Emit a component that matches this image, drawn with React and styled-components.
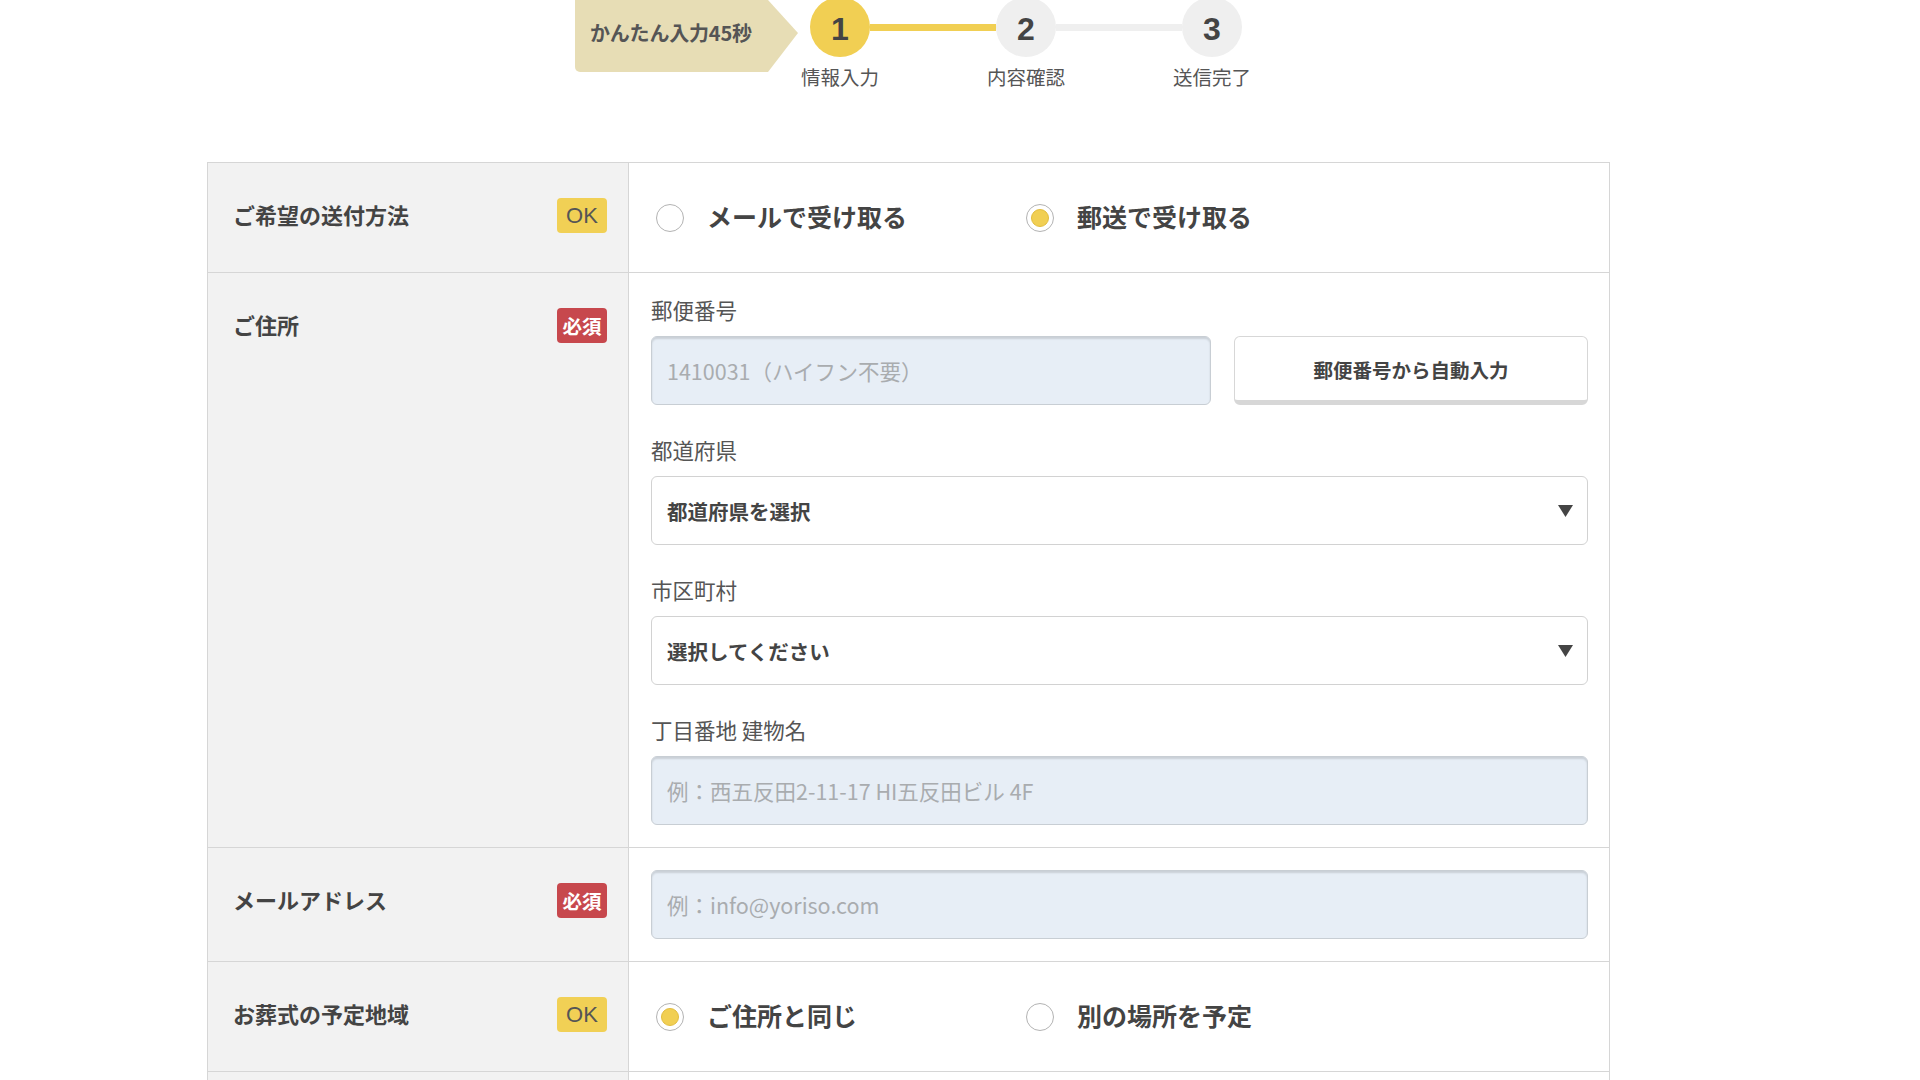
import React from "react";
import styled, { createGlobalStyle } from "styled-components";

const Global = createGlobalStyle`
  html, body { margin: 0; padding: 0; background: #fff; }
  body {
    font-family: "Noto Sans CJK JP", "Noto Sans", sans-serif;
    color: #444;
  }
  * { box-sizing: border-box; }
`;

const Page = styled.div`
  width: 1920px;
  padding-left: 207px;
`;

const Header = styled.header`
  display: flex;
  align-items: flex-start;
  height: 162px;
  padding-left: 368px;
`;

const TimeBadge = styled.div`
  width: 223px;
  height: 72px;
  margin-right: 12px;
  background: #e7ddb5;
  border-radius: 0 0 0 5px;
  clip-path: polygon(0 0, 193px 0, 223px 46%, 193px 100%, 0 100%);
  display: flex;
  align-items: center;
  padding: 0 0 8px 15px;
  font-size: 20px;
  font-weight: 700;
  color: #555;
  letter-spacing: -0.2px;
`;

const Stepper = styled.div`
  display: flex;
  align-items: flex-start;
  margin-top: -3px;
`;

const Step = styled.div`
  display: flex;
  flex-direction: column;
  align-items: center;
  width: 60px;
`;

const Circle = styled.div`
  width: 60px;
  height: 60px;
  border-radius: 50%;
  background: ${(p) => (p.$active ? "#f1cf53" : "#efefef")};
  display: flex;
  align-items: center;
  justify-content: center;
  font-family: "Liberation Sans", "Noto Sans", sans-serif;
  font-size: 32px;
  font-weight: 700;
  color: #444;
  padding-top: 4px;
`;

const StepLabel = styled.div`
  margin-top: 8px;
  font-size: 19.5px;
  line-height: 23px;
  white-space: nowrap;
  color: #555;
`;

const Connector = styled.div`
  width: 126px;
  height: 7px;
  margin-top: 27px;
  background: ${(p) => (p.$done ? "#f1cf53" : "#efefef")};
`;

const Table = styled.div`
  width: 1403px;
  border: 1px solid #d6d6d6;
  border-bottom: none;
`;

const Row = styled.div`
  display: grid;
  grid-template-columns: 421px 1fr;
  border-bottom: 1px solid #d6d6d6;
`;

const LabelCell = styled.div`
  background: #f2f2f2;
  border-right: 1px solid #d6d6d6;
  padding: 35px 21px 39px 25px;
  min-height: 109px;
`;

const LabelLine = styled.div`
  display: flex;
  align-items: center;
  justify-content: space-between;
`;

const LabelText = styled.span`
  font-size: 22px;
  font-weight: 700;
  color: #444;
  margin-top: -4px;
`;

const Tag = styled.span`
  display: inline-flex;
  align-items: center;
  justify-content: center;
  height: 35px;
  min-width: 50px;
  border-radius: 4px;
  background: ${(p) => (p.$required ? "#c7484d" : "#f1d055")};
  color: ${(p) => (p.$required ? "#fff" : "#555")};
  font-size: ${(p) => (p.$required ? "19.5px" : "22px")};
  font-weight: ${(p) => (p.$required ? 700 : 400)};
  font-family: ${(p) =>
    p.$required ? `"Noto Sans CJK JP", sans-serif` : `"Liberation Sans", sans-serif`};
`;

const ContentCell = styled.div`
  background: #fff;
  padding: ${(p) => p.$pad || "22px 21px 22px 22px"};
  display: flex;
  flex-direction: column;
  justify-content: center;
`;

const RadioGroup = styled.div`
  display: flex;
  align-items: center;
`;

const RadioOption = styled.label`
  display: flex;
  align-items: center;
  width: 370px;
  gap: 23px;
  font-size: 25px;
  font-weight: 700;
  color: #444;
  cursor: pointer;
  span:last-child {
    margin-top: -3px;
  }
`;

const RadioMark = styled.span`
  width: 28px;
  height: 28px;
  border-radius: 50%;
  border: 1.5px solid #b3b3b3;
  background: #fff;
  display: flex;
  align-items: center;
  justify-content: center;
  flex-shrink: 0;
  &::after {
    content: "";
    display: ${(p) => (p.$checked ? "block" : "none")};
    width: 16px;
    height: 16px;
    border-radius: 50%;
    background: #f1cf53;
    border: 1px solid #e2bd3e;
  }
`;

const Field = styled.div`
  & + & {
    margin-top: 30px;
  }
`;

const FieldLabel = styled.div`
  font-size: 21.5px;
  line-height: 30px;
  margin-bottom: 11px;
  color: #555;
`;

const PostalLine = styled.div`
  display: grid;
  grid-template-columns: 560px 1fr;
  gap: 23px;
`;

const TextInput = styled.input`
  display: block;
  width: 100%;
  height: 69px;
  border: 1px solid #c8ced4;
  border-radius: 6px;
  background: #e7eef6;
  box-shadow: inset 0 2px 2px rgba(0, 0, 0, 0.13);
  padding: 0 15px;
  font-family: "Noto Sans CJK JP", sans-serif;
  font-size: 21.5px;
  color: #444;
  outline: none;
  &::placeholder {
    color: #a9acaf;
  }
`;

const AutoButton = styled.button`
  height: 69px;
  border: 1px solid #d7d7d7;
  border-bottom: 5px solid #d7d7d7;
  border-radius: 6px;
  background: #fff;
  font-family: "Noto Sans CJK JP", sans-serif;
  font-size: 19.5px;
  font-weight: 700;
  color: #444;
  padding: 2px 0 0;
  cursor: pointer;
`;

const SelectBox = styled.div`
  height: 69px;
  border: 1px solid #d2d2d2;
  border-radius: 6px;
  background: #fff;
  display: flex;
  align-items: center;
  justify-content: space-between;
  padding: 0 14px 0 15px;
  font-size: 20.5px;
  font-weight: 700;
  color: #444;
`;

const Arrow = () => (
  <svg width="15" height="12" viewBox="0 0 15 12" aria-hidden="true">
    <polygon points="0,0 15,0 7.5,12" fill="#444" />
  </svg>
);

const Select = ({ children }) => (
  <SelectBox role="combobox">
    <span>{children}</span>
    <Arrow />
  </SelectBox>
);

const Radio = ({ checked, children }) => (
  <RadioOption>
    <RadioMark $checked={checked} />
    <span>{children}</span>
  </RadioOption>
);

const Label = ({ text, required }) => (
  <LabelCell>
    <LabelLine>
      <LabelText>{text}</LabelText>
      <Tag $required={required}>{required ? "必須" : "OK"}</Tag>
    </LabelLine>
  </LabelCell>
);

const steps = [
  { n: 1, label: "情報入力" },
  { n: 2, label: "内容確認" },
  { n: 3, label: "送信完了" },
];

export default function App() {
  return (
    <Page>
      <Global />
      <Header>
        <TimeBadge>かんたん入力45秒</TimeBadge>
        <Stepper>
          {steps.map((s, i) => (
            <React.Fragment key={s.n}>
              {i > 0 && <Connector $done={i === 1} />}
              <Step>
                <Circle $active={i === 0}>{s.n}</Circle>
                <StepLabel>{s.label}</StepLabel>
              </Step>
            </React.Fragment>
          ))}
        </Stepper>
      </Header>

      <Table>
        <Row>
          <Label text="ご希望の送付方法" />
          <ContentCell $pad="0 21px 0 27px">
            <RadioGroup>
              <Radio>メールで受け取る</Radio>
              <Radio checked>郵送で受け取る</Radio>
            </RadioGroup>
          </ContentCell>
        </Row>

        <Row>
          <Label text="ご住所" required />
          <ContentCell $pad="22px 21px 22px 22px">
            <Field>
              <FieldLabel>郵便番号</FieldLabel>
              <PostalLine>
                <TextInput placeholder="1410031（ハイフン不要）" />
                <AutoButton>郵便番号から自動入力</AutoButton>
              </PostalLine>
            </Field>
            <Field>
              <FieldLabel>都道府県</FieldLabel>
              <Select>都道府県を選択</Select>
            </Field>
            <Field>
              <FieldLabel>市区町村</FieldLabel>
              <Select>選択してください</Select>
            </Field>
            <Field>
              <FieldLabel>丁目番地 建物名</FieldLabel>
              <TextInput placeholder="例：西五反田2-11-17 HI五反田ビル 4F" />
            </Field>
          </ContentCell>
        </Row>

        <Row>
          <Label text="メールアドレス" required />
          <ContentCell>
            <TextInput placeholder="例：info@yoriso.com" />
          </ContentCell>
        </Row>

        <Row>
          <Label text="お葬式の予定地域" />
          <ContentCell $pad="0 21px 0 27px">
            <RadioGroup>
              <Radio checked>ご住所と同じ</Radio>
              <Radio>別の場所を予定</Radio>
            </RadioGroup>
          </ContentCell>
        </Row>

        <Row>
          <LabelCell />
          <ContentCell />
        </Row>
      </Table>
    </Page>
  );
}
